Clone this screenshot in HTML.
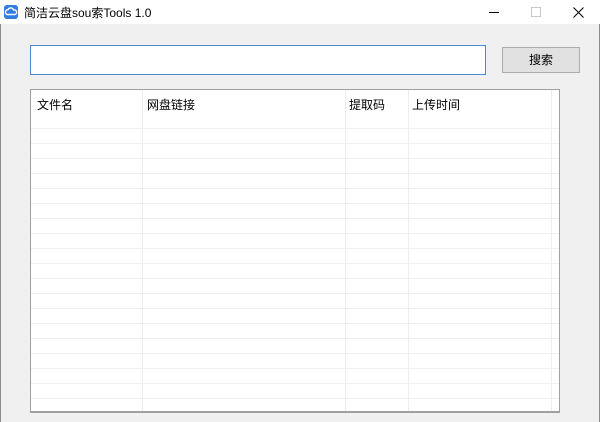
<!DOCTYPE html><html><head><meta charset="utf-8"><style>
*{margin:0;padding:0;box-sizing:border-box}
body{width:600px;height:422px;background:#f0f0f0;font-family:"Liberation Sans","Noto Sans CJK SC",sans-serif;font-size:12px;color:#000;position:relative;overflow:hidden}
.win{position:absolute;left:0;top:0;width:600px;height:422px;box-shadow:inset 1px 0 0 #8a8a8a,inset -1px 0 0 #8a8a8a}
.title{position:absolute;left:0;top:0;width:600px;height:24px;background:#fff}
.title span{position:absolute;left:24px;top:4px;font-size:12px}
.ic{position:absolute;left:4px;top:5px;width:14px;height:14px;background:#2f7de1;border-radius:3px}
.inp{position:absolute;left:30px;top:45px;width:456px;height:30px;background:#fff;border:1px solid #4a8ad0}
.btn{position:absolute;left:502px;top:47px;width:78px;height:26px;background:#e1e1e1;border:1px solid #adadad;text-align:center;line-height:24px}
.list{position:absolute;left:30px;top:89px;width:530px;height:324px;background:#fff;border:1px solid #a0a0a0;border-bottom:2px solid #a0a0a0;
background-image:repeating-linear-gradient(to bottom,transparent 0,transparent 14px,#f0f0f0 14px,#f0f0f0 15px);background-position:0 24px;background-repeat:repeat-x;background-size:100% 300px}
.hdr{position:absolute;left:0;top:0;width:528px;height:24px;background:#fff}
.col{position:absolute;top:0;bottom:0;width:1px;background:#ececec}
.h{position:absolute;top:6px}
</style></head><body><div class="win">
<div class="title"><div class="ic"><svg width="14" height="14" viewBox="0 0 14 14"><path d="M3 9.5a2.5 2.5 0 0 1 1-4.8 3 3 0 0 1 5.6.3A2.3 2.3 0 0 1 11 9.5z" fill="none" stroke="#fff" stroke-width="1.4"/></svg></div><span>简洁云盘sou索Tools 1.0</span>
<div style="position:absolute;left:489px;top:12px;width:10px;height:1px;background:#000"></div>
<div style="position:absolute;left:531px;top:7px;width:10px;height:10px;border:1px solid #c8c8c8"></div>
<svg style="position:absolute;left:573px;top:7px" width="11" height="11"><path d="M0.5 0.5L10.5 10.5M10.5 0.5L0.5 10.5" stroke="#000" stroke-width="1"/></svg>
</div>
<div class="inp"></div>
<div class="btn">搜索</div>
<div class="list">
<div class="hdr"></div>
<div class="col" style="left:111px"></div><div class="col" style="left:314px"></div><div class="col" style="left:377px"></div><div class="col" style="left:520px"></div>
<div class="h" style="left:6px">文件名</div><div class="h" style="left:116px">网盘链接</div><div class="h" style="left:318px">提取码</div><div class="h" style="left:381px">上传时间</div>
</div>
</div></body></html>
